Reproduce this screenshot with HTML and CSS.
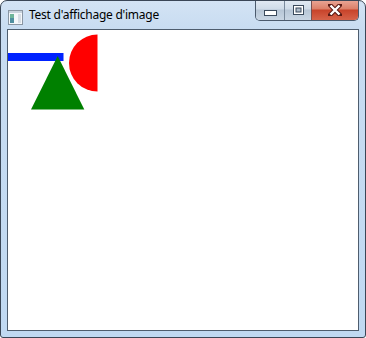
FILE: index.html
```html
<!DOCTYPE html>
<html>
  <head>
    <title>Test d'affichage d'image</title>
    <link rel="stylesheet" href="styles.css">
  </head>
  <body>
    <div class="window">
      <div class="titlebar">
        <span class="app-icon">
          <svg width="15" height="15" viewBox="0 0 15 15">
            <rect x="0.5" y="0.5" width="14" height="14" fill="#f4f7fa" stroke="#8a96a3" />
            <rect x="1" y="1" width="13" height="2" fill="#c9d3dd" />
            <rect x="2" y="4" width="4" height="9" fill="#4f8fa0" />
            <rect x="2" y="4" width="4" height="4" fill="#6fb59a" />
            <rect x="10" y="4" width="3" height="9" fill="#d7dee5" />
          </svg>
        </span>
        <span class="title">Test d'affichage d'image</span>
        <div class="caption-buttons">
          <div class="cap-btn cap-min">
            <svg width="13" height="6" viewBox="0 0 13 6">
              <rect x="0.5" y="0.5" width="12" height="5" fill="#fff" stroke="#3b4a5c" />
            </svg>
          </div>
          <div class="cap-btn cap-max">
            <svg width="11" height="10" viewBox="0 0 11 10">
              <rect x="0.5" y="0.5" width="10" height="9" fill="#fff" stroke="#3b4a5c" />
              <rect x="3" y="3" width="5" height="4" fill="#aebccb" stroke="#3b4a5c" />
            </svg>
          </div>
          <div class="cap-btn cap-close">
            <svg width="14" height="12" viewBox="0 0 14 12">
              <path d="M2 1 L12 11 M12 1 L2 11" stroke="#5a1a14" stroke-width="4.4" stroke-linecap="square" />
              <path d="M2.5 1.5 L11.5 10.5 M11.5 1.5 L2.5 10.5" stroke="#fff" stroke-width="2.4" />
            </svg>
          </div>
        </div>
      </div>
      <div class="client">
        <svg width="350" height="300" viewBox="0 0 350 300">
          <rect x="0" y="23" width="55.5" height="8" fill="#0022ff" />
          <path d="M89.5 4.5 A28.5 28.5 0 0 0 89.5 61.5 Z" fill="#ff0000" />
          <polygon points="49.7,26 23,79.5 76.3,79.5" fill="#008000" />
        </svg>
      </div>
    </div>
  </body>
</html>
```

FILE: styles.css
```css
body {
  margin: 0;
  font-family: "Noto Sans", "Open Sans", sans-serif;
}
.window {
  box-sizing: content-box;
  width: 352px;
  height: 330px;
  padding: 0 6px 6px 6px;
  border: 1px solid #3a4656;
  border-radius: 7px 7px 3px 3px;
  background: linear-gradient(180deg, #d3e3f4 0px, #c8dcf1 28px, #c0d9f2 100%);
  overflow: hidden;
}
.titlebar {
  height: 28px;
  display: flex;
  align-items: flex-start;
}
.app-icon {
  margin: 7px 0 0 1px;
  height: 15px;
}
.title {
  margin: 6px 0 0 6px;
  font-size: 12px;
  line-height: 16px;
  letter-spacing: -0.25px;
  color: #000;
}
.caption-buttons {
  margin-left: auto;
  margin-top: -1px;
  display: flex;
  height: 20px;
  border: 1px solid #4b5a6d;
  border-top: none;
  border-radius: 0 0 5px 5px;
  overflow: hidden;
}
.cap-btn {
  display: flex;
  align-items: center;
  justify-content: center;
}
.cap-min {
  width: 28px;
  border-right: 1px solid #7a8a9c;
  background: linear-gradient(180deg, #e2eaf3 0%, #cfdbe8 45%, #b7c6d6 50%, #c9d6e4 100%);
}
.cap-min svg {
  margin-top: 6px;
}
.cap-max {
  width: 26px;
  border-right: 1px solid #7a5050;
  background: linear-gradient(180deg, #e2eaf3 0%, #cfdbe8 45%, #b7c6d6 50%, #c9d6e4 100%);
}
.cap-close {
  width: 46px;
  background: linear-gradient(180deg, #eaa898 0%, #dc7f68 45%, #c8432a 50%, #d6634a 100%);
}
.client {
  width: 350px;
  height: 300px;
  border: 1px solid #4e5d6e;
  background: #fff;
}
.client svg {
  display: block;
}
```
